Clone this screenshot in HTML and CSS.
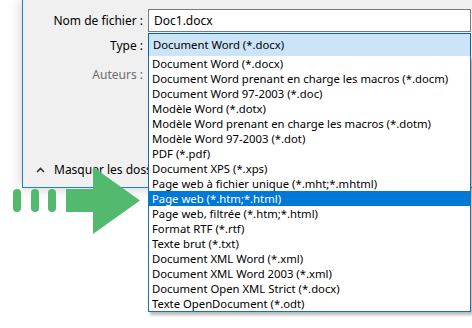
FILE: index.html
```html
<!DOCTYPE html>
<html lang="fr">
<head>
  <meta charset="UTF-8" />
  <title>Enregistrer sous</title>
  <link rel="stylesheet" href="styles.css">
</head>
<body>

<div class="dialog">
  <div class="form">
    <label class="lbl">Nom de fichier :</label>
    <div class="field">Doc1.docx</div>

    <label class="lbl">Type :</label>
    <div class="combo">
      <div class="combo-value">Document Word (*.docx)</div>
      <ul class="dropdown">
        <li>Document Word (*.docx)</li>
        <li>Document Word prenant en charge les macros (*.docm)</li>
        <li>Document Word 97-2003 (*.doc)</li>
        <li>Modèle Word (*.dotx)</li>
        <li>Modèle Word prenant en charge les macros (*.dotm)</li>
        <li>Modèle Word 97-2003 (*.dot)</li>
        <li>PDF (*.pdf)</li>
        <li>Document XPS (*.xps)</li>
        <li>Page web à fichier unique (*.mht;*.mhtml)</li>
        <li class="selected">Page web (*.htm;*.html)</li>
        <li>Page web, filtrée (*.htm;*.html)</li>
        <li>Format RTF (*.rtf)</li>
        <li>Texte brut (*.txt)</li>
        <li>Document XML Word (*.xml)</li>
        <li>Document XML Word 2003 (*.xml)</li>
        <li>Document Open XML Strict (*.docx)</li>
        <li>Texte OpenDocument (*.odt)</li>
      </ul>
    </div>

    <label class="lbl muted">Auteurs :</label>
    <div class="field-empty"></div>
  </div>

  <div class="footer">
    <svg class="chevron" width="9" height="6" viewBox="0 0 9 6">
      <polyline points="1,5 4.5,1.5 8,5" fill="none" stroke="#333" stroke-width="1.6"/>
    </svg>
    <span>Masquer les dossiers</span>
  </div>
</div>

<svg class="arrow" width="140" height="80" viewBox="0 0 140 80">
  <rect x="3" y="29" width="8" height="23" rx="4" fill="#52b96e"/>
  <rect x="21" y="29" width="8" height="23" rx="4" fill="#52b96e"/>
  <rect x="38" y="29" width="8" height="23" rx="4" fill="#52b96e"/>
  <polygon points="56,29 83,29 83,7 130,40.5 83,74 83,52 56,52" fill="#52b96e"/>
</svg>

</body>
</html>
```

FILE: styles.css
```css
* { box-sizing: border-box; }
body {
  margin: 0;
  position: relative;
  width: 472px;
  height: 328px;
  overflow: hidden;
  background: #fff;
  font-family: 'Noto Sans', 'Segoe UI', sans-serif;
  font-size: 11.3px;
  color: #000;
}
.dialog {
  margin-left: 22px;
  width: 470px;
  height: 188px;
  padding-top: 9px;
  background: #f0f0f0;
  border-left: 1px solid #1883d7;
  border-bottom: 1px solid #1883d7;
  box-shadow: 0 0 12px rgba(0,0,0,0.22);
  display: flex;
  flex-direction: column;
}
.form {
  display: grid;
  grid-template-columns: 120px 323px;
  column-gap: 5px;
  row-gap: 1px;
  align-items: center;
}
.lbl {
  text-align: right;
  white-space: nowrap;
  line-height: 15px;
  font-size: 12px;
}
.lbl.muted {
  color: #6d6d6d;
  margin-top: 4px;
}
.field {
  height: 23px;
  padding: 0 5px;
  line-height: 21px;
  font-size: 12px;
  background: #fff;
  border: 1px solid #7a7a7a;
}
.combo {
  position: relative;
  height: 24px;
}
.combo-value {
  height: 24px;
  padding: 0 4px;
  line-height: 22px;
  background: #cce4f7;
  border: 1px solid #0063b1;
}
.field-empty {
  height: 24px;
  margin-top: 4px;
}
.dropdown {
  position: absolute;
  top: 23px;
  left: 0;
  width: 323px;
  margin: 0;
  padding: 0;
  list-style: none;
  background: #fff;
  border: 1px solid #1b6fb5;
  border-top: none;
  box-shadow: 2px 3px 3px rgba(0,0,0,0.28);
  z-index: 2;
}
.dropdown li {
  height: 15px;
  line-height: 15px;
  padding-left: 3px;
  white-space: nowrap;
}
.dropdown li.selected {
  background: #0078d7;
  color: #fff;
}
.footer {
  margin-top: auto;
  width: 125px;
  overflow: hidden;
  padding: 0 0 10px 13px;
  display: flex;
  align-items: center;
  gap: 9px;
  white-space: nowrap;
  line-height: 15px;
  font-size: 12px;
}
.chevron { display: block; flex-shrink: 0; }
.arrow {
  position: absolute;
  left: 10px;
  top: 160px;
  z-index: 3;
}
```
